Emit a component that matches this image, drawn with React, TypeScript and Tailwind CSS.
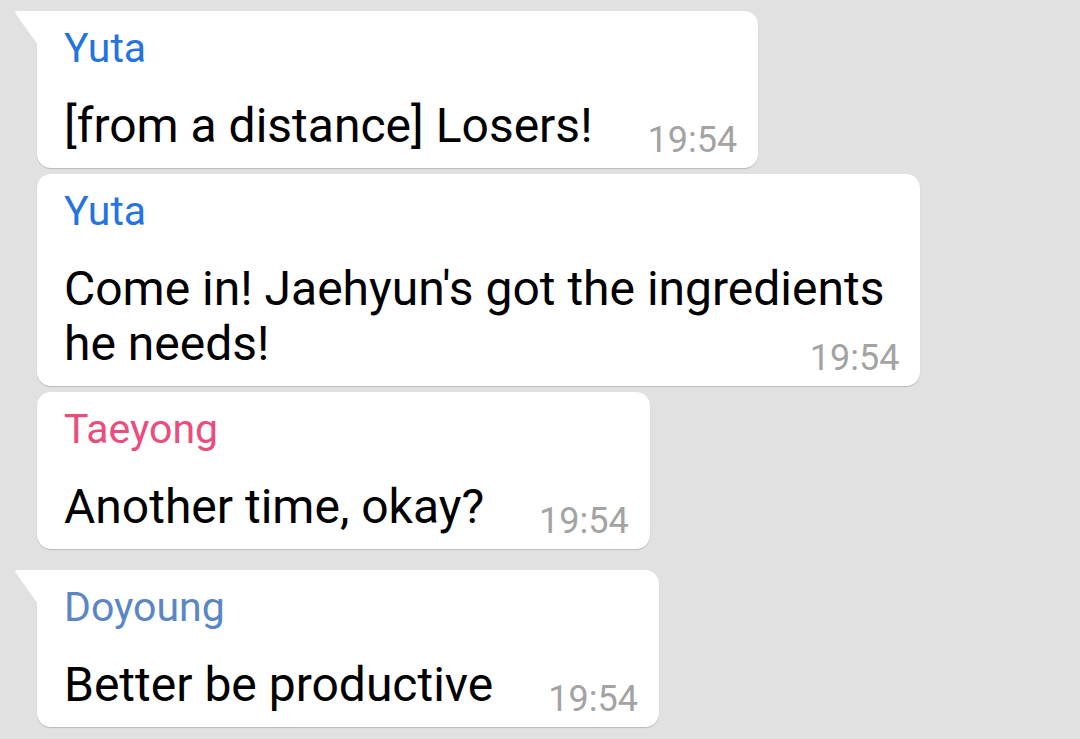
import React, { FC } from "react";

type Msg = {
  name: string;
  color: string;
  lines: string[];
  tail?: boolean;
  gapTop: string;
};

const messages: Msg[] = [
  {
    name: "Yuta",
    color: "text-[#2473e0]",
    lines: ["[from a distance] Losers!"],
    tail: true,
    gapTop: "mt-0",
  },
  {
    name: "Yuta",
    color: "text-[#2473e0]",
    lines: ["Come in! Jaehyun's got the ingredients", "he needs!"],
    gapTop: "mt-[6px]",
  },
  {
    name: "Taeyong",
    color: "text-[#ea4c7d]",
    lines: ["Another time, okay?"],
    gapTop: "mt-[6px]",
  },
  {
    name: "Doyoung",
    color: "text-[#5a87c4]",
    lines: ["Better be productive"],
    tail: true,
    gapTop: "mt-[21px]",
  },
];

const Tail: FC = () => (
  <svg
    className="absolute left-[-22px] top-0"
    width="23"
    height="36"
    viewBox="0 0 23 36"
  >
    <path d="M2 0 H23 V34 L0.6 2.4 Q-0.2 0 2 0 Z" fill="#ffffff" />
  </svg>
);

const Bubble: FC<{ msg: Msg }> = ({ msg }) => {
  const rest = msg.lines.slice(0, -1);
  const last = msg.lines[msg.lines.length - 1];
  return (
    <div
      className={`relative ${msg.gapTop} w-fit bg-white pl-[27px] pr-[21px] pt-[13px] pb-[10px] shadow-[0_1px_1px_rgba(0,0,0,0.18)] ${
        msg.tail ? "rounded-[14px] rounded-tl-none" : "rounded-[14px]"
      }`}
    >
      {msg.tail && <Tail />}
      <div className={`text-[41px] leading-[48px] ${msg.color}`}>{msg.name}</div>
      <div className="mt-[26px] text-[48px] leading-[55px] text-black">
        {rest.map((l, i) => (
          <div key={i} className="pr-[15px] whitespace-nowrap">
            {l}
          </div>
        ))}
        <div className="flex items-end justify-between gap-[55px]">
          <span className="mb-[5px] whitespace-nowrap">{last}</span>
          <span className="text-[36px] leading-[36px] text-[#a3a3a3]">19:54</span>
        </div>
      </div>
    </div>
  );
};

const App: FC = () => {
  return (
    <div className="min-h-[739px] w-[1080px] bg-[#e1e1e1] pl-[37px] pt-[11px] font-['Roboto',sans-serif] antialiased">
      {messages.map((m, i) => (
        <Bubble key={i} msg={m} />
      ))}
    </div>
  );
};

export default App;
